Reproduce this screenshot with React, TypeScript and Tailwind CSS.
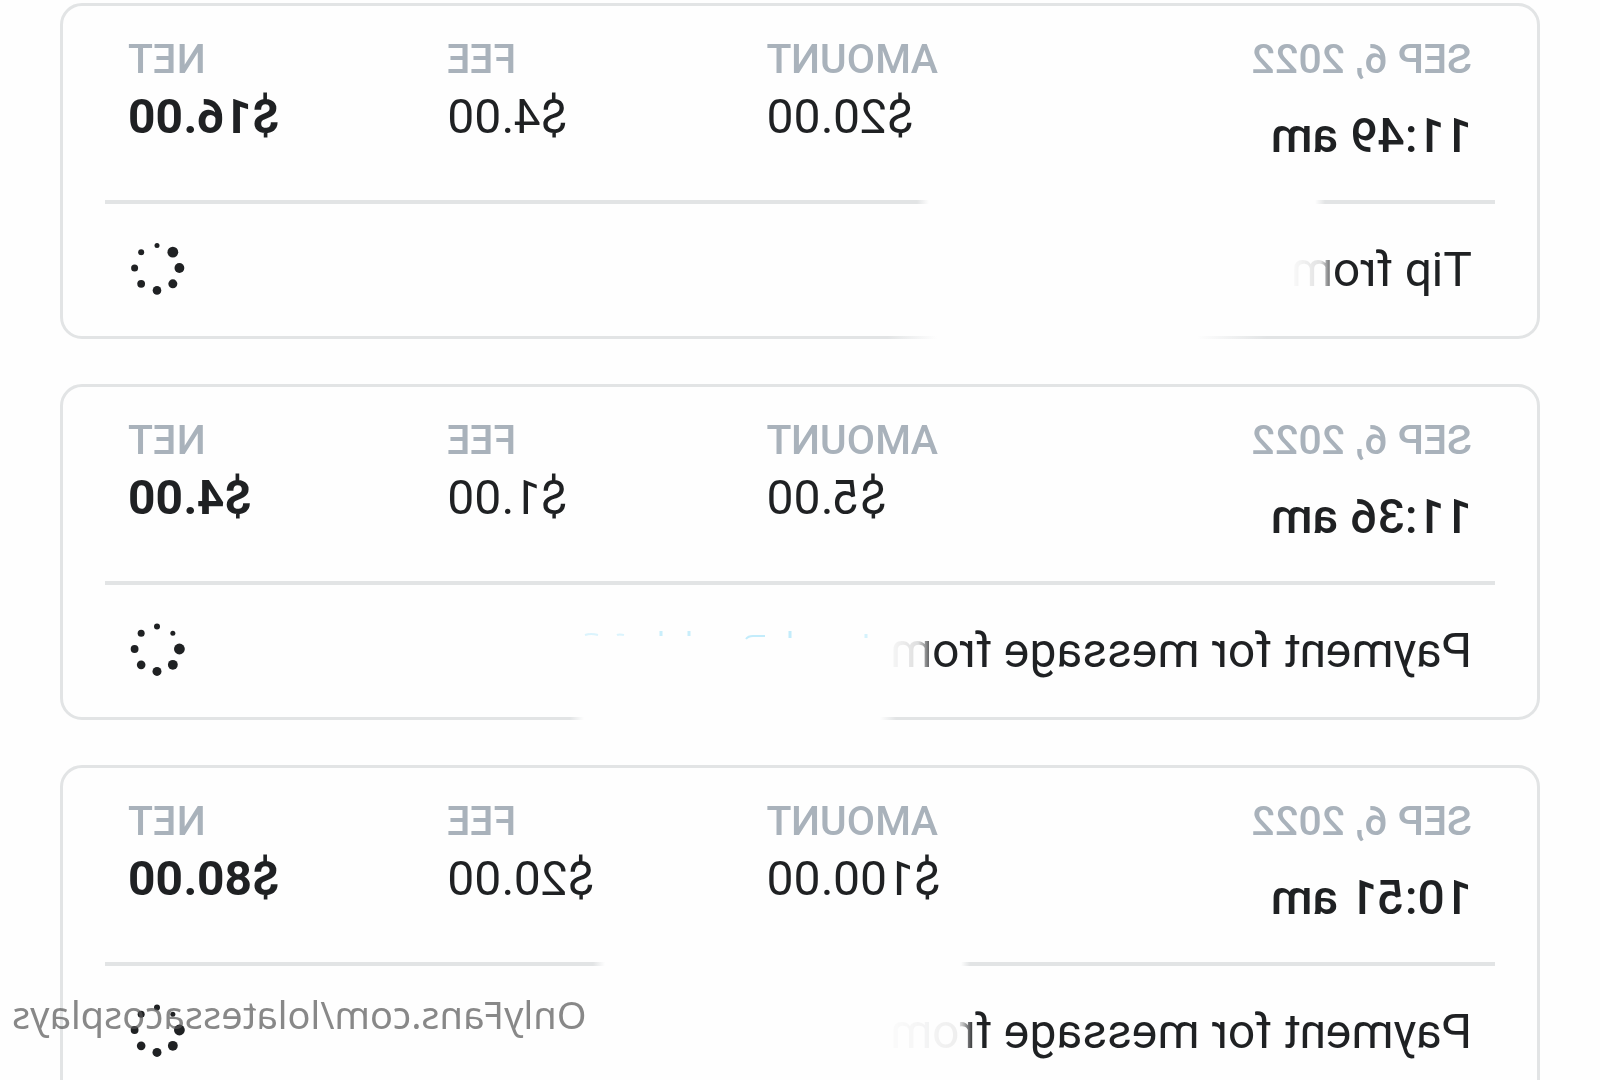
type Transaction = {
  date: string;
  time: string;
  amount: string;
  fee: string;
  net: string;
  description: string;
  spinnerStep: number;
  dividerClass: string;
  descriptionClass: string;
  edgeClass?: string;
  trace?: boolean;
};

// Each row hides the sender's name with its own soft white fade.
const transactions: Transaction[] = [
  {
    date: "SEP 6, 2022",
    time: "11:49 am",
    amount: "$20.00",
    fee: "$4.00",
    net: "$16.00",
    description: "Tip from",
    spinnerStep: 0,
    dividerClass: "bg-[linear-gradient(90deg,#e2e4e5_170px,transparent_180px,transparent_566px,#e2e4e5_578px)]",
    descriptionClass: "[mask-image:linear-gradient(90deg,#000_136px,rgb(0_0_0/0.45)_145px,rgb(0_0_0/0.13)_151px,transparent_184px)]",
    edgeClass: "ml-[228px] w-[380px] bg-[linear-gradient(90deg,transparent,#fefefe_70px,#fefefe_330px,transparent)]",
  },
  {
    date: "SEP 6, 2022",
    time: "11:36 am",
    amount: "$5.00",
    fee: "$1.00",
    net: "$4.00",
    description: "Payment for message from",
    spinnerStep: 1,
    dividerClass: "bg-[#e2e4e5]",
    descriptionClass: "[mask-image:linear-gradient(90deg,#000_538px,rgb(0_0_0/0.45)_547px,rgb(0_0_0/0.14)_554px,transparent_590px)]",
    edgeClass: "ml-[599px] w-[326px] bg-[linear-gradient(90deg,transparent,#fefefe_16px,#fefefe_312px,transparent)]",
    trace: true,
  },
  {
    date: "SEP 6, 2022",
    time: "10:51 am",
    amount: "$100.00",
    fee: "$20.00",
    net: "$80.00",
    description: "Payment for message from",
    spinnerStep: 1,
    dividerClass: "bg-[linear-gradient(90deg,#e2e4e5_525px,transparent_534px,transparent_890px,#e2e4e5_902px)]",
    descriptionClass: "[mask-image:linear-gradient(90deg,#000_498px,rgb(0_0_0/0.35)_508px,rgb(0_0_0/0.07)_514px,transparent_600px)]",
  },
];

const dotRadii = [5.4, 4.9, 4.5, 4.3, 3.9, 3.5, 3, 2.5];

// Eight dots shrinking along the ring, starting at the largest one.
function Spinner({ step }: { step: number }) {
  return (
    <svg viewBox="-29 -29 58 58" className="h-[58px] w-[58px] shrink-0" role="img" aria-label="Pending">
      {dotRadii.map((r, i) => {
        const angle = ((i + step - 1) * Math.PI) / 4;
        return <circle key={i} cx={-22.4 * Math.cos(angle)} cy={22.4 * Math.sin(angle)} r={r} fill="#1f2123" />;
      })}
    </svg>
  );
}

function Figure({ label, value, bold }: { label: string; value: string; bold?: boolean }) {
  return (
    <div className="text-right">
      <dt className="text-[41px] leading-[48px] font-medium text-[#a9b2bb]">{label}</dt>
      <dd className={bold ? "mt-1.5 text-[48px] leading-[56px] font-bold" : "mt-1.5 text-[48px] leading-[56px]"}>{value}</dd>
    </div>
  );
}

// Faint tops of the link letters that the fade leaves visible.
function LinkTrace() {
  return (
    <svg viewBox="0 0 300 10" className="h-[10px] w-[300px] shrink-0" aria-hidden="true">
      <g fill="none" stroke="#c3ecfb" strokeWidth="3">
        <path d="M8 4v4" opacity="0.7" />
        <path d="M84 1v7" />
        <path d="M109 6h12q5 0 7 3" strokeWidth="2" />
        <path d="M185 1v5M213 1v5" opacity="0.9" />
        <path d="M250 5q5-1 7 0M276 5q7-2 13 0" opacity="0.6" strokeWidth="2" />
      </g>
    </svg>
  );
}

function TransactionCard({ item }: { item: Transaction }) {
  return (
    <article className="relative rounded-[22px] border-[3px] border-[#e2e4e5] px-[42px]">
      <dl className="grid grid-cols-[1.21fr_1fr_1fr_1fr] px-[23px] pt-[29px] pb-9">
        <div className="whitespace-nowrap">
          <dt className="text-[41px] leading-[48px] font-medium text-[#a9b2bb]">{item.date}</dt>
          <dd className="mt-[25px] text-[48px] leading-[56px] font-medium">{item.time}</dd>
        </div>
        <Figure label="AMOUNT" value={item.amount} />
        <Figure label="FEE" value={item.fee} />
        <Figure label="NET" value={item.net} bold />
      </dl>
      <div role="separator" className={`h-1 ${item.dividerClass}`} />
      <div className="flex items-start px-[23px] pt-[35px] pb-[38px]">
        <p className={`mt-[3px] text-[48px] leading-[56px] ${item.descriptionClass}`}>{item.description}</p>
        <div className="flex grow pt-2.5 pl-4">{item.trace && <LinkTrace />}</div>
        <Spinner step={item.spinnerStep} />
      </div>
      {item.edgeClass && <div className={`absolute -bottom-2 h-4 ${item.edgeClass}`} />}
    </article>
  );
}

export default function App() {
  return (
    <main className="relative h-screen -scale-x-100 overflow-hidden bg-[#fefefe] font-[Roboto,sans-serif] text-[#1f2123]">
      <div className="flex flex-col gap-[45px] px-[60px] pt-[3px]">
        {transactions.map((item) => (
          <TransactionCard key={item.time} item={item} />
        ))}
      </div>
      <p className="absolute right-3 bottom-[38px] font-['Noto_Sans',sans-serif] text-[38px] leading-[56px] text-[#555555]/70">
        OnlyFans.com/lolatessacosplays
      </p>
    </main>
  );
}
